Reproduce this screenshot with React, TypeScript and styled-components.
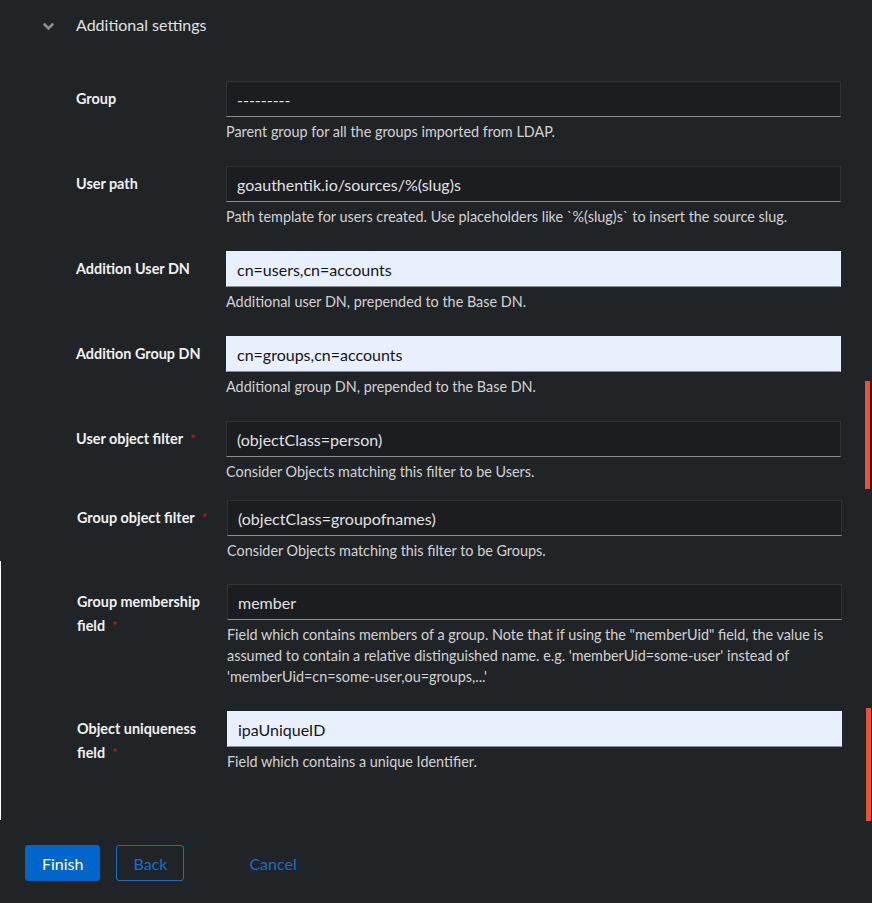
import React from "react";
import styled, { createGlobalStyle } from "styled-components";

const GlobalStyle = createGlobalStyle`
  html, body {
    margin: 0;
    padding: 0;
    background: #212427;
  }
  body {
    font-family: Lato, "Liberation Sans", sans-serif;
  }
  * { box-sizing: border-box; }
`;

const Page = styled.div`
  position: relative;
  width: 872px;
  height: 903px;
  display: flex;
  flex-direction: column;
  background: #212427;
  overflow: hidden;
`;

const Body = styled.div`
  flex: 1;
  display: flex;
  flex-direction: column;
`;

const Toggle = styled.div`
  height: 48px;
  display: flex;
  align-items: center;
  padding-left: 43px;
  gap: 22px;
  color: #e0e0e0;
  font-size: 16px;
`;

const Chevron = styled.svg`
  width: 11px;
  height: 7px;
  margin-top: 4px;
  fill: #8a8d90;
`;

const FieldList = styled.div<{ $top: number; $left: number }>`
  display: flex;
  flex-direction: column;
  gap: 24px;
  padding-top: ${(p) => p.$top}px;
  padding-left: ${(p) => p.$left}px;
`;

const StitchedBlock = styled(FieldList)`
  flex: 1;
  border-left: 1px solid #ffffff;
`;

const FormGroup = styled.div`
  display: grid;
  grid-template-columns: 140px 615px;
  column-gap: 10px;
  align-items: start;
`;

const Label = styled.label`
  padding-top: 6px;
  font-size: 14.4px;
  font-weight: 700;
  line-height: 24px;
  color: #f0f0f0;
`;

const Required = styled.span`
  display: inline-block;
  margin-left: 7px;
  line-height: 1;
  color: #c9190b;
  font-size: 13px;
  font-weight: 400;
`;

const Control = styled.div`
  display: flex;
  flex-direction: column;
`;

const TextInput = styled.input<{ $autofill?: boolean }>`
  display: block;
  width: 100%;
  height: 36px;
  margin: 0;
  padding: 0 10px;
  font-family: Lato, "Liberation Sans", sans-serif;
  font-size: 16px;
  outline: none;
  border: 1px solid ${(p) => (p.$autofill ? "#e8f0fe" : "#303236")};
  border-bottom-color: #8a8d90;
  background: ${(p) => (p.$autofill ? "#e8f0fe" : "#1b1d21")};
  color: ${(p) => (p.$autofill ? "#151515" : "#e0e0e0")};
`;

const Help = styled.div`
  margin-top: 4px;
  font-size: 14.4px;
  line-height: 21px;
  color: #d2d2d2;
`;

const Footer = styled.div`
  height: 83px;
  display: flex;
  align-items: flex-start;
  padding: 25px 25px 0;
  gap: 16px;
`;

const Button = styled.button<{ $variant: "primary" | "secondary" | "link" }>`
  height: 36px;
  padding: 0 16px;
  font-family: Lato, "Liberation Sans", sans-serif;
  font-size: 16px;
  border-radius: 3px;
  cursor: pointer;
  background: ${(p) => (p.$variant === "primary" ? "#0066cc" : "transparent")};
  color: ${(p) => (p.$variant === "primary" ? "#ffffff" : "#1a6ccc")};
  border: 1px solid
    ${(p) => (p.$variant === "secondary" ? "#1a6ccc" : p.$variant === "primary" ? "#0066cc" : "transparent")};
  margin-left: ${(p) => (p.$variant === "link" ? "32px" : "0")};
`;

const ScrollMark = styled.div<{ $top: number; $height: number; $left: number }>`
  position: absolute;
  left: ${(p) => p.$left}px;
  top: ${(p) => p.$top}px;
  width: 5px;
  height: ${(p) => p.$height}px;
  background: #f1502f;
`;

type Field = {
  label: string;
  required?: boolean;
  value: string;
  autofill?: boolean;
  help: string;
};

const upper: Field[] = [
  { label: "Group", value: "---------", help: "Parent group for all the groups imported from LDAP." },
  {
    label: "User path",
    value: "goauthentik.io/sources/%(slug)s",
    help: "Path template for users created. Use placeholders like `%(slug)s` to insert the source slug.",
  },
  { label: "Addition User DN", value: "cn=users,cn=accounts", autofill: true, help: "Additional user DN, prepended to the Base DN." },
  { label: "Addition Group DN", value: "cn=groups,cn=accounts", autofill: true, help: "Additional group DN, prepended to the Base DN." },
  { label: "User object filter", required: true, value: "(objectClass=person)", help: "Consider Objects matching this filter to be Users." },
];

const middle: Field[] = [
  { label: "Group object filter", required: true, value: "(objectClass=groupofnames)", help: "Consider Objects matching this filter to be Groups." },
];

const lower: Field[] = [
  {
    label: "Group membership field",
    required: true,
    value: "member",
    help: "Field which contains members of a group. Note that if using the \"memberUid\" field, the value is assumed to contain a relative distinguished name. e.g. 'memberUid=some-user' instead of 'memberUid=cn=some-user,ou=groups,...'",
  },
  { label: "Object uniqueness field", required: true, value: "ipaUniqueID", autofill: true, help: "Field which contains a unique Identifier." },
];

const Row = ({ f }: { f: Field }) => (
  <FormGroup>
    <Label>
      {f.label}
      {f.required && <Required>*</Required>}
    </Label>
    <Control>
      <TextInput readOnly value={f.value} $autofill={f.autofill} />
      <Help>{f.help}</Help>
    </Control>
  </FormGroup>
);

export default function App() {
  return (
    <>
      <GlobalStyle />
      <Page>
        <Body>
          <Toggle>
            <Chevron viewBox="0 150 320 210">
              <path d="M143 352.3L7 216.3c-9.4-9.4-9.4-24.6 0-33.9l22.6-22.6c9.4-9.4 24.6-9.4 33.9 0l96.4 96.4 96.4-96.4c9.4-9.4 24.6-9.4 33.9 0l22.6 22.6c9.4 9.4 9.4 24.6 0 33.9l-136 136c-9.2 9.4-24.4 9.4-33.8 0z" />
            </Chevron>
            <span>Additional settings</span>
          </Toggle>
          <FieldList $top={33} $left={76}>
            {upper.map((f) => (
              <Row key={f.label} f={f} />
            ))}
          </FieldList>
          <FieldList $top={18} $left={77}>
            {middle.map((f) => (
              <Row key={f.label} f={f} />
            ))}
          </FieldList>
          <StitchedBlock $top={23} $left={76}>
            {lower.map((f) => (
              <Row key={f.label} f={f} />
            ))}
          </StitchedBlock>
        </Body>
        <Footer>
          <Button $variant="primary">Finish</Button>
          <Button $variant="secondary">Back</Button>
          <Button $variant="link">Cancel</Button>
        </Footer>
        <ScrollMark $left={865} $top={381} $height={108} />
        <ScrollMark $left={866} $top={708} $height={113} />
      </Page>
    </>
  );
}
